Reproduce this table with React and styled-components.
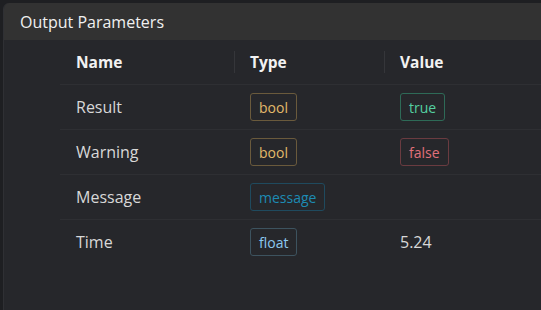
import React from "react";
import styled, { createGlobalStyle } from "styled-components";

const GlobalStyle = createGlobalStyle`
  html, body {
    margin: 0;
    padding: 0;
    background: #1e1f22;
    font-family: "Open Sans", "Noto Sans", sans-serif;
  }
`;

const Page = styled.div`
  width: 541px;
  height: 310px;
  padding: 3px 0 0 3px;
  box-sizing: border-box;
  overflow: hidden;
`;

const Panel = styled.div`
  height: 100%;
  background: #26272b;
  border-radius: 6px 0 0 0;
  border-left: 1px solid #2f3034;
  display: flex;
  flex-direction: column;
  overflow: hidden;
`;

const PanelHeader = styled.div`
  height: 37px;
  flex-shrink: 0;
  background: #323232;
  display: flex;
  align-items: center;
  padding-left: 16px;
  color: #f0f0f0;
  font-size: 16px;
`;

const Table = styled.div`
  padding-left: 56px;
`;

const Row = styled.div`
  display: grid;
  grid-template-columns: 174px 150px 1fr;
  height: 45px;
  align-items: center;
  border-bottom: 1px solid ${(p) => (p.$last ? "transparent" : "#2e2f33")};
  box-sizing: border-box;
`;

const HeadCell = styled.div`
  position: relative;
  padding-left: 16px;
  color: #f2f2f2;
  font-size: 15.5px;
  font-weight: 700;

  &:not(:first-child)::before {
    content: "";
    position: absolute;
    left: 0;
    top: 50%;
    transform: translateY(-50%);
    height: 22px;
    width: 1px;
    background: #35363a;
  }
`;

const Cell = styled.div`
  padding-left: 16px;
  color: #d8d8d8;
  font-size: 16px;
`;

const badgeColors = {
  bool: { fg: "#e2b96a", border: "#6a5a3c" },
  message: { fg: "#1d8bb3", border: "#1f4a5e" },
  float: { fg: "#8cc8ee", border: "#3d535f" },
  true: { fg: "#54cfa0", border: "#2e6a57" },
  false: { fg: "#e0707a", border: "#6a3b40" },
};

const Badge = styled.span`
  display: inline-flex;
  align-items: center;
  height: 28px;
  box-sizing: border-box;
  padding: 0 8px;
  border-radius: 3px;
  border: 1px solid ${(p) => badgeColors[p.$kind].border};
  color: ${(p) => badgeColors[p.$kind].fg};
  font-size: 14px;
`;

const params = [
  { name: "Result", type: "bool", value: "true", valueKind: "true" },
  { name: "Warning", type: "bool", value: "false", valueKind: "false" },
  { name: "Message", type: "message" },
  { name: "Time", type: "float", value: "5.24" },
];

const App = () => {
  return (
    <Page>
      <GlobalStyle />
      <Panel>
        <PanelHeader>Output Parameters</PanelHeader>
        <Table>
          <Row>
            <HeadCell>Name</HeadCell>
            <HeadCell>Type</HeadCell>
            <HeadCell>Value</HeadCell>
          </Row>
          {params.map((p, i) => (
            <Row key={p.name} $last={i === params.length - 1}>
              <Cell>{p.name}</Cell>
              <Cell>
                <Badge $kind={p.type}>{p.type}</Badge>
              </Cell>
              <Cell>
                {p.valueKind ? (
                  <Badge $kind={p.valueKind}>{p.value}</Badge>
                ) : (
                  p.value
                )}
              </Cell>
            </Row>
          ))}
        </Table>
      </Panel>
    </Page>
  );
};

export default App;
